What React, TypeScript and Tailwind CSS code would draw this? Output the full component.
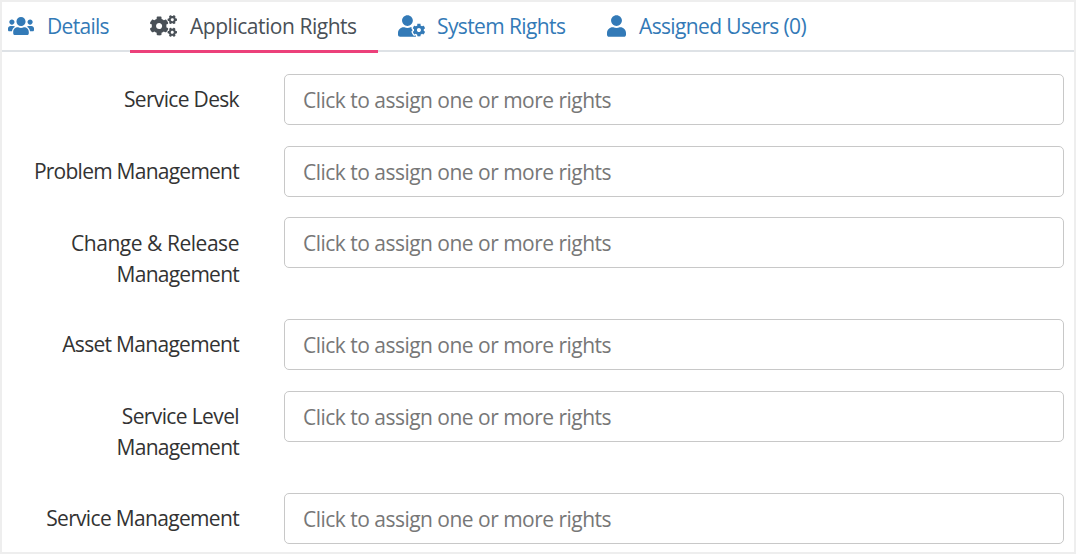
import React from "react";
import { FaUsers, FaCogs, FaUserCog, FaUser } from "react-icons/fa";

const tabs = [
  { label: "Details", Icon: FaUsers, box: "w-[128px] pl-[6px] text-[#337ab7]", icon: "w-[26px] mr-[13px]", text: "tracking-[-0.7px]" },
  { label: "Application Rights", Icon: FaCogs, box: "w-[248px] pl-[20px] text-[#495057] border-b-[3px] border-[#ec407a]", icon: "w-[27px] mr-[13px]", text: "tracking-[-0.47px]" },
  { label: "System Rights", Icon: FaUserCog, box: "w-[208px] pl-[20px] text-[#337ab7]", icon: "w-[27px] mr-[12px]", text: "tracking-[-0.61px]" },
  { label: "Assigned Users (0)", Icon: FaUser, box: "pl-[21px] text-[#337ab7]", icon: "w-[19px] mr-[13px]", text: "tracking-[-0.64px]" },
];

const rows = [
  { lines: [{ text: "Service Desk", spacing: "tracking-[-0.67px]" }], height: "h-[72px]", top: "pt-[10px]" },
  { lines: [{ text: "Problem Management", spacing: "tracking-[-0.75px]" }], height: "h-[71px]", top: "pt-[10px]" },
  {
    lines: [
      { text: "Change & Release", spacing: "tracking-[-0.46px]" },
      { text: "Management", spacing: "tracking-[-0.75px]" },
    ],
    height: "h-[102px]",
    top: "pt-[11px]",
  },
  { lines: [{ text: "Asset Management", spacing: "tracking-[-0.7px]" }], height: "h-[72px]", top: "pt-[10px]" },
  {
    lines: [
      { text: "Service Level", spacing: "tracking-[-0.62px]" },
      { text: "Management", spacing: "tracking-[-0.75px]" },
    ],
    height: "h-[102px]",
    top: "pt-[10px]",
  },
  { lines: [{ text: "Service Management", spacing: "tracking-[-0.67px]" }], height: "h-[51px]", top: "pt-[10px]" },
];

export default function App() {
  return (
    <div className="h-[554px] w-[1076px] overflow-hidden border-2 border-[#eeeeee] bg-white font-['Open_Sans','Noto_Sans',sans-serif] text-[21px] leading-[31px]">
      <nav className="flex h-[50px] items-start shadow-[inset_0_-2px_0_#dee2e6]">
        {tabs.map(({ label, Icon, box, icon, text }, i) => (
          <button
            key={label}
            type="button"
            role="tab"
            aria-selected={i === 1}
            className={`flex shrink-0 items-start whitespace-nowrap pt-[9px] ${i === 1 ? "h-[51px]" : "h-[50px]"} ${box}`}
          >
            <Icon className={`mt-[4px] h-[22px] shrink-0 ${icon}`} />
            <span className={text}>{label}</span>
          </button>
        ))}
      </nav>
      <form className="pt-[22px]">
        {rows.map(({ lines, height, top }) => (
          <div key={lines[0].text} className={`flex items-start ${height}`}>
            <label className={`w-[237px] shrink-0 text-right text-[#333333] ${top}`}>
              {lines.map(({ text, spacing }) => (
                <span key={text} className={`block whitespace-nowrap ${spacing}`}>{text}</span>
              ))}
            </label>
            <div className="ml-[45px] flex h-[51px] w-[780px] items-center rounded-[5px] border border-[#c8c8c8] pt-[2px] pl-[18px] tracking-[-0.52px] text-[#777777]">
              <span>Click to assign one or more rights</span>
            </div>
          </div>
        ))}
      </form>
    </div>
  );
}
